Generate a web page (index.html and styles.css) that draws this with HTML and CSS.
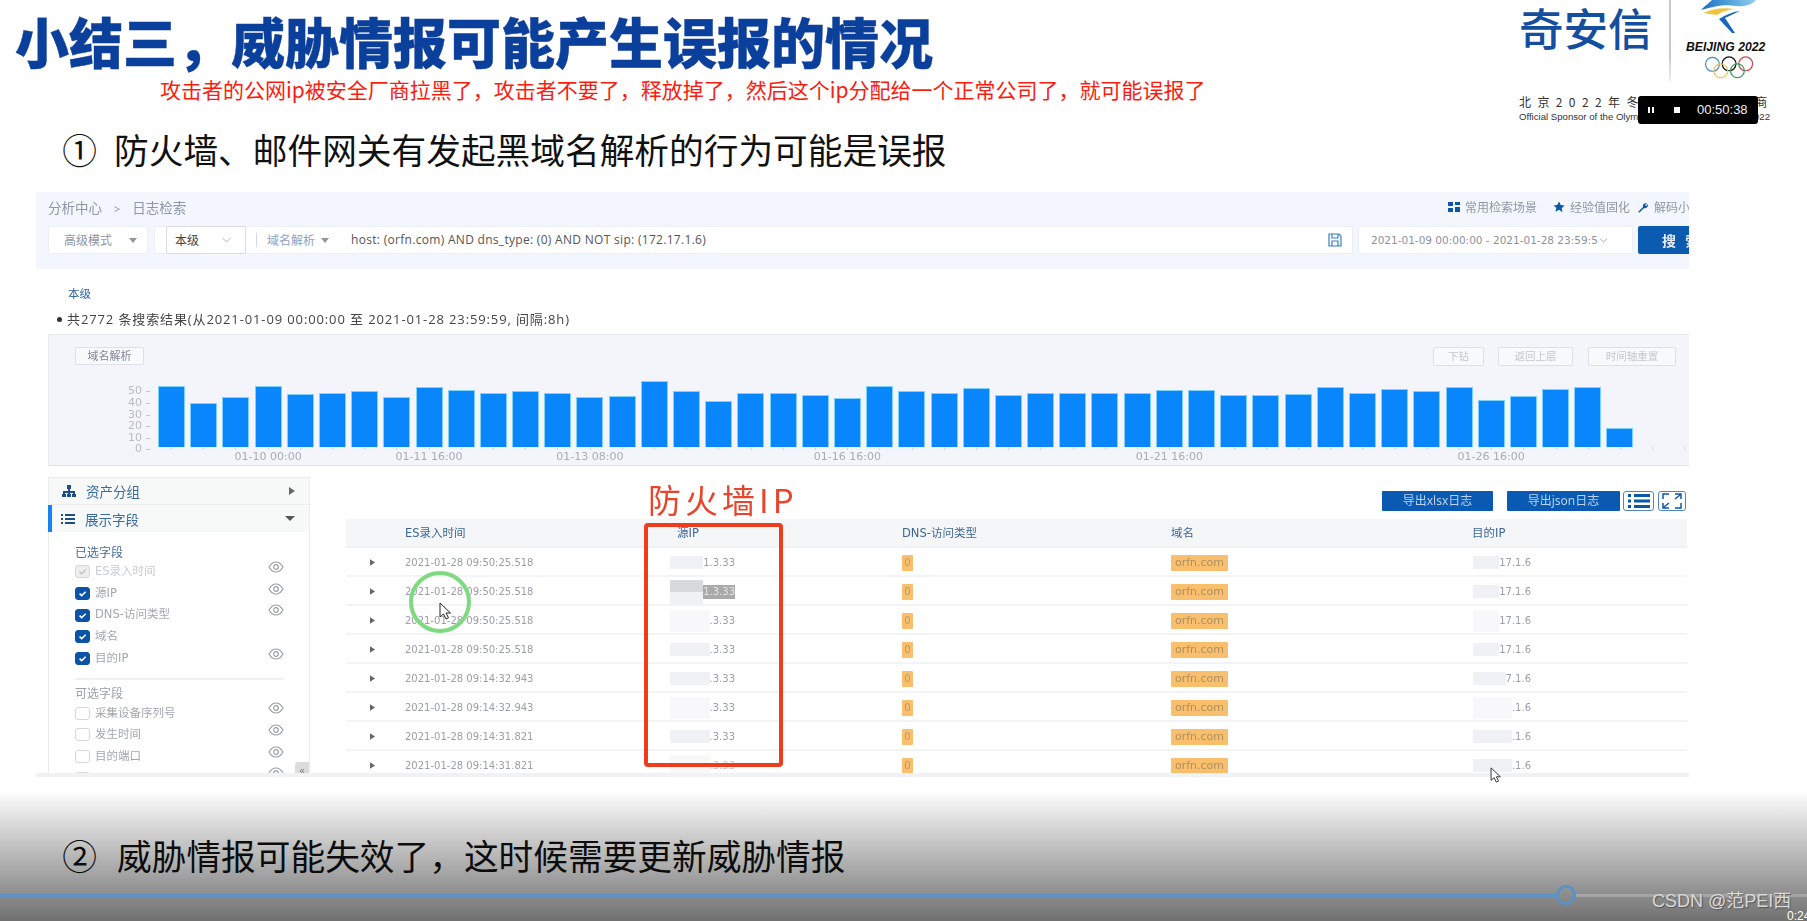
FILE: index.html
```html
<!DOCTYPE html>
<html lang="zh-CN">
<head>
<meta charset="utf-8">
<title>小结三，威胁情报可能产生误报的情况</title>
<link rel="stylesheet" href="styles.css">
</head>
<body>
<svg class="defs" width="0" height="0" aria-hidden="true">
  <symbol id="eye" viewBox="0 0 16 12"><path d="M1 6c2-3.4 4.4-5 7-5s5 1.600 7 5c-2 3.400-4.400 5-7 5s-5-1.600-7-5z" fill="none" stroke="#9a9ea5" stroke-width="1.200"/><circle cx="8" cy="6" r="2.300" fill="none" stroke="#9a9ea5" stroke-width="1.200"/></symbol>
  <symbol id="tick" viewBox="0 0 15 13"><path d="M4 6.700l2.500 2.300 4.800-4.500" fill="none" stroke="#fff" stroke-width="1.800"/></symbol>
  <symbol id="tri" viewBox="0 0 6 8"><path d="M0 0l6 4-6 4z" fill="#666"/></symbol>
</svg>
<main class="page">
  <header class="top">
    <div class="heads">
      <h1 class="title">小结三，威胁情报可能产生误报的情况</h1>
      <p class="note">攻击者的公网ip被安全厂商拉黑了，攻击者不要了，释放掉了，然后这个ip分配给一个正常公司了，就可能误报了</p>
      <p class="point point-one"><span class="num">①</span><span>防火墙、邮件网关有发起黑域名解析的行为可能是误报</span></p>
    </div>
    <div class="brand">
      <div class="brand-row">
        <span class="qax">奇安信</span>
        <span class="brand-rule"></span>
        <div class="games">
          <svg class="emblem" viewBox="0 0 60 34" width="60" height="34">
            <defs><linearGradient id="rib" x1="0" x2="1"><stop offset="0" stop-color="#1670c4"/><stop offset="1" stop-color="#8fd0ee"/></linearGradient></defs>
            <path d="M2 10C7 5 11 2 13 0h44c-4 5-12 7-20 6-12-2-20 0-35 4z" fill="url(#rib)"/>
            <path d="M4 13c10-4 20-6 31-4-7 1-13 3-17 6-5-1-10-1-14-2z" fill="#efc43f"/>
            <path d="M41 11L26 18l10 15-3 0-13-14c6-4 13-7 21-8z" fill="#1a68bd"/>
          </svg>
          <span class="bj">BEIJING 2022</span>
          <svg class="rings" viewBox="0 0 56 26" width="52" height="24" fill="none" stroke-width="1.300">
            <circle cx="9" cy="9" r="7.500" stroke="#3d86c6"/><circle cx="27" cy="8.500" r="7.500" stroke="#111"/><circle cx="45" cy="8.500" r="7.500" stroke="#d0454f"/><circle cx="18" cy="16" r="7.500" stroke="#e9c462"/><circle cx="36" cy="16" r="7.500" stroke="#3f9a58"/>
          </svg>
        </div>
      </div>
      <p class="sponsor-cn">北京2022年冬奥会官方赞助商</p>
      <p class="sponsor-en">Official Sponsor of the Olympic Winter Games Beijing 2022</p>
    </div>
  </header>

  <section class="shot">
    <div class="search">
      <div class="crumbs">
        <span class="crumb-path">分析中心<i class="crumb-gap">&gt;</i>日志检索</span>
        <span class="links">
          <svg class="ln-ico" viewBox="0 0 12 12" width="12" height="12"><path d="M0 1h5v4H0zM7 1h5v3H7zM0 7h5v4H0zM7 6h5v5H7z" fill="#0b57a8"/></svg><span class="ln ln-a">常用检索场景</span>
          <svg class="ln-ico" viewBox="0 0 12 12" width="12" height="12"><path d="M6 .5l1.700 3.600 3.900.5-2.900 2.700.8 3.900L6 8.800l-3.500 1.900.8-3.900L.4 4.600l3.900-.5z" fill="#0b57a8"/></svg><span class="ln ln-b">经验值固化</span>
          <svg class="ln-ico" viewBox="0 0 12 12" width="12" height="12"><path d="M1 11l5-5c-.6-2 .8-4.500 4-4L8 4l1 1 2-2c.3 3-2 4.800-4.200 4.200L2.500 11.500z" fill="#0b57a8"/></svg><span class="ln">解码小工具</span>
        </span>
      </div>
      <div class="filters">
        <div class="box mode"><span>高级模式</span><i class="caret"></i></div>
        <div class="box query">
          <div class="level"><span>本级</span><svg viewBox="0 0 12 7" width="11" height="6"><path d="M1 1l5 4.500L11 1" fill="none" stroke="#aaa"/></svg></div>
          <i class="sep"></i>
          <span class="qtype">域名解析</span><i class="caret"></i>
          <span class="qtext">host: (orfn.com) AND dns_type: (0) AND NOT sip: (172.17.1.6)</span>
          <svg class="save" viewBox="0 0 14 14" width="14" height="14"><path d="M1 1h10l2 2v10H1z M4 1v4h6V1 M4 13V8h6v5" fill="none" stroke="#3a7dbe" stroke-width="1.200"/></svg>
        </div>
        <div class="box range"><span class="range-text">2021-01-09 00:00:00 - 2021-01-28 23:59:5</span><svg viewBox="0 0 12 7" width="9" height="5"><path d="M1 1l5 4.500L11 1" fill="none" stroke="#888"/></svg></div>
        <button class="go">搜 索</button>
      </div>
    </div>
    <p class="scope">本级</p>
    <p class="summary"><i class="dot"></i>共2772 条搜索结果(从2021-01-09 00:00:00 至 2021-01-28 23:59:59, 间隔:8h)</p>

    <div class="chart">
      <div class="chart-head">
        <span class="tag">域名解析</span>
        <span class="ghosts"><span class="ghost g1">下钻</span><span class="ghost g2">返回上层</span><span class="ghost g3">时间轴重置</span></span>
      </div>
      <div class="plot">
        <div class="yaxis"><span>50 –</span><span>40 –</span><span>30 –</span><span>20 –</span><span>10 –</span><span>0 –</span></div>
        <div class="bars">
          <i style="height:60px"></i><i style="height:43px"></i><i style="height:49px"></i><i style="height:60px"></i><i style="height:52px"></i><i style="height:53px"></i><i style="height:55px"></i><i style="height:49px"></i><i style="height:59px"></i><i style="height:56px"></i><i style="height:53px"></i><i style="height:55px"></i><i style="height:53px"></i><i style="height:49px"></i><i style="height:50px"></i><i style="height:65px"></i><i style="height:55px"></i><i style="height:45px"></i><i style="height:53px"></i><i style="height:53px"></i><i style="height:51px"></i><i style="height:48px"></i><i style="height:60px"></i><i style="height:55px"></i><i style="height:53px"></i><i style="height:58px"></i><i style="height:51px"></i><i style="height:53px"></i><i style="height:53px"></i><i style="height:53px"></i><i style="height:53px"></i><i style="height:56px"></i><i style="height:56px"></i><i style="height:51px"></i><i style="height:51px"></i><i style="height:52px"></i><i style="height:59px"></i><i style="height:53px"></i><i style="height:57px"></i><i style="height:55px"></i><i style="height:59px"></i><i style="height:46px"></i><i style="height:50px"></i><i style="height:57px"></i><i style="height:59px"></i><i style="height:18px"></i>
        </div>
      </div>
      <div class="xaxis">
        <span class="x3">01-10 00:00</span><span class="x8">01-11 16:00</span><span class="x13">01-13 08:00</span><span class="x21">01-16 16:00</span><span class="x31">01-21 16:00</span><span class="x41">01-26 16:00</span>
      </div>
    </div>

    <div class="lower">
      <aside class="side">
        <div class="acc">
          <svg viewBox="0 0 14 12" width="14" height="12"><path d="M5 0h4v4H8v2h5v3h1v3h-4V9h1V8H8v1h1v3H5V9h1V8H3v1h1v3H0V9h1V6h5V4H5z" fill="#1d4f86"/></svg>
          <span>资产分组</span><svg class="acc-end" viewBox="0 0 6 8" width="6" height="8"><use href="#tri"/></svg>
        </div>
        <div class="acc acc-on">
          <svg viewBox="0 0 14 12" width="14" height="12"><path d="M0 1h2v2H0zM4 1h10v2H4zM0 5h2v2H0zM4 5h10v2H4zM0 9h2v2H0zM4 9h10v2H4z" fill="#1d4f86"/></svg>
          <span>展示字段</span><i class="caret caret-dark acc-end"></i>
        </div>
        <div class="fields">
          <p class="group">已选字段</p>
          <div class="field off"><i class="chk dis"><svg viewBox="0 0 15 13"><path d="M4 6.700l2.500 2.300 4.800-4.500" fill="none" stroke="#bbb" stroke-width="1.500"/></svg></i><span>ES录入时间</span><svg class="eye"><use href="#eye"/></svg></div>
          <div class="field"><i class="chk on"><svg viewBox="0 0 15 13"><use href="#tick"/></svg></i><span>源IP</span><svg class="eye"><use href="#eye"/></svg></div>
          <div class="field"><i class="chk on"><svg viewBox="0 0 15 13"><use href="#tick"/></svg></i><span>DNS-访问类型</span><svg class="eye"><use href="#eye"/></svg></div>
          <div class="field"><i class="chk on"><svg viewBox="0 0 15 13"><use href="#tick"/></svg></i><span>域名</span></div>
          <div class="field"><i class="chk on"><svg viewBox="0 0 15 13"><use href="#tick"/></svg></i><span>目的IP</span><svg class="eye"><use href="#eye"/></svg></div>
          <hr class="rule">
          <p class="group group-b">可选字段</p>
          <div class="field"><i class="chk"></i><span>采集设备序列号</span><svg class="eye"><use href="#eye"/></svg></div>
          <div class="field"><i class="chk"></i><span>发生时间</span><svg class="eye"><use href="#eye"/></svg></div>
          <div class="field"><i class="chk"></i><span>目的端口</span><svg class="eye"><use href="#eye"/></svg></div>
          <div class="field"><i class="chk"></i><span></span><svg class="eye"><use href="#eye"/></svg></div>
        </div>
        <span class="collapse">«</span>
      </aside>
      <div class="results">
        <div class="tools">
          <button class="export ex-a">导出xlsx日志</button>
          <button class="export ex-b">导出json日志</button>
          <span class="tool t-list"><svg viewBox="0 0 22 14" width="22" height="14"><path d="M0 0h3v3H0zM6 0h16v3H6zM0 5.500h3v3H0zM6 5.500h16v3H6zM0 11h3v3H0zM6 11h16v3H6z" fill="#0b57a8"/></svg></span>
          <span class="tool t-full"><svg viewBox="0 0 20 16" width="20" height="16"><path d="M1 6V1h6M13 1h6v5M1 10v5h6M13 15h6v-5M2 14l5-4M18 2l-5 4" fill="none" stroke="#0b57a8" stroke-width="1.500"/></svg></span>
        </div>
        <div class="table">
          <div class="row head"><span></span><span>ES录入时间</span><span>源IP</span><span>DNS-访问类型</span><span>域名</span><span>目的IP</span></div>
          <div class="row"><svg class="exp"><use href="#tri"/></svg><span>2021-01-28 09:50:25.518</span><span class="ip src"><i class="mask"></i>1.3.33</span><span><b class="zero">0</b></span><span><b class="host">orfn.com</b></span><span class="ip dst"><i class="mask"></i>17.1.6</span></div>
          <div class="row"><svg class="exp"><use href="#tri"/></svg><span>2021-01-28 09:50:25.518</span><span class="ip src"><i class="mask mask-sel"></i><em class="picked">1.3.33</em></span><span><b class="zero">0</b></span><span><b class="host">orfn.com</b></span><span class="ip dst"><i class="mask"></i>17.1.6</span></div>
          <div class="row"><svg class="exp"><use href="#tri"/></svg><span>2021-01-28 09:50:25.518</span><span class="ip src"><i class="mask faint"></i>.3.33</span><span><b class="zero">0</b></span><span><b class="host">orfn.com</b></span><span class="ip dst"><i class="mask faint"></i>17.1.6</span></div>
          <div class="row"><svg class="exp"><use href="#tri"/></svg><span>2021-01-28 09:50:25.518</span><span class="ip src"><i class="mask"></i>.3.33</span><span><b class="zero">0</b></span><span><b class="host">orfn.com</b></span><span class="ip dst"><i class="mask"></i>17.1.6</span></div>
          <div class="row"><svg class="exp"><use href="#tri"/></svg><span>2021-01-28 09:14:32.943</span><span class="ip src"><i class="mask"></i>.3.33</span><span><b class="zero">0</b></span><span><b class="host">orfn.com</b></span><span class="ip dst"><i class="mask"></i>7.1.6</span></div>
          <div class="row"><svg class="exp"><use href="#tri"/></svg><span>2021-01-28 09:14:32.943</span><span class="ip src"><i class="mask faint"></i>.3.33</span><span><b class="zero">0</b></span><span><b class="host">orfn.com</b></span><span class="ip dst"><i class="mask faint"></i>.1.6</span></div>
          <div class="row"><svg class="exp"><use href="#tri"/></svg><span>2021-01-28 09:14:31.821</span><span class="ip src"><i class="mask"></i>.3.33</span><span><b class="zero">0</b></span><span><b class="host">orfn.com</b></span><span class="ip dst"><i class="mask"></i>.1.6</span></div>
          <div class="row"><svg class="exp"><use href="#tri"/></svg><span>2021-01-28 09:14:31.821</span><span class="ip src fade"><i class="mask faint"></i>.3.33</span><span><b class="zero">0</b></span><span><b class="host">orfn.com</b></span><span class="ip dst"><i class="mask"></i>.1.6</span></div>
        </div>
      </div>
    </div>
    <div class="band"></div>
  </section>

  <p class="point point-two"><span class="num">②</span><span>威胁情报可能失效了，这时候需要更新威胁情报</span></p>

  <span class="annot-label">防火墙IP</span>
  <span class="annot-box"></span>
  <span class="click-ring"></span>
  <svg class="cursor cur-a" viewBox="0 0 12 18" width="12" height="18"><path d="M1 1v14l3.500-3 2.500 5 2.500-1.200-2.500-4.800h4.500z" fill="#fff" stroke="#222"/></svg>
  <svg class="cursor cur-b" viewBox="0 0 12 18" width="11" height="16"><path d="M1 1v14l3.500-3 2.500 5 2.500-1.200-2.500-4.800h4.500z" fill="#fff" stroke="#222"/></svg>

  <div class="fade-bottom"></div>
  <div class="progress"><span class="done"></span><span class="knob"></span><span class="rest"></span></div>
  <span class="watermark">CSDN @范PEI西</span>
  <span class="clock">0:24</span>
  <div class="recorder">
    <svg viewBox="0 0 8 8" width="8" height="8"><path d="M1 1h2v6H1zM5 1h2v6H5z" fill="#fff"/></svg>
    <svg viewBox="0 0 8 8" width="8" height="8"><path d="M1 1h6v6H1z" fill="#fff"/></svg>
    <span>00:50:38</span>
  </div>
</main>
</body>
</html>
```
FILE: styles.css
```css
* { box-sizing: border-box; }
html, body { margin: 0; padding: 0; background: #fff; }
body { font-family: "Noto Sans", "Noto Sans CJK SC", sans-serif; }
p, h1 { margin: 0; }
i, em { font-style: normal; }
.defs { position: absolute; }

.page { position: relative; width: 1807px; height: 921px; overflow: hidden; background: #fff; }

/* slide head */
.top { display: flex; height: 192px; }
.heads { flex: 1; }
.title { padding: 13px 0 0 15px; font: 900 54px/55px "Noto Sans CJK SC", sans-serif; color: #0b3f9c; white-space: nowrap; -webkit-text-stroke: .4px #0b3f9c; }
.note { margin: 9px 0 0 160px; font: 400 21px/24px "Noto Sans CJK SC", sans-serif; color: #fb1c10; white-space: nowrap; }
.point { display: flex; align-items: center; gap: 17px; font: 400 34.7px/44px "Noto Sans CJK SC", sans-serif; color: #111; white-space: nowrap; }
.point-one { margin: 26px 0 0 62px; }
.point-two { margin: 56px 0 0 62px; gap: 20px; position: relative; }
.num { width: 35px; text-align: center; }

/* sponsor brand */
.brand { width: 289px; padding-left: 1px; }
.brand-row { display: flex; height: 82px; }
.qax { width: 150px; padding-top: 5px; font: 500 44.5px/44px "Noto Sans CJK SC", sans-serif; color: #144f9f; white-space: nowrap; }
.brand-rule { width: 2px; height: 81px; background: linear-gradient(#c3cad6 70%, #eef0f4); }
.games { display: flex; flex-direction: column; margin-left: 15px; width: 90px; }
.emblem { margin-left: 13px; height: 34px; }
.bj { margin-top: 7px; font: italic 700 12.2px/12px "Liberation Sans", sans-serif; color: #111; white-space: nowrap; }
.rings { margin: 3px 0 0 18px; }
.sponsor-cn { margin-top: 12px; font: 400 12px/15px "Noto Sans CJK SC", sans-serif; letter-spacing: 6.4px; color: #333; white-space: nowrap; }
.sponsor-en { margin-top: 2px; font: 400 9.6px/12px "Liberation Sans", sans-serif; color: #333; white-space: nowrap; }

/* embedded screenshot */
.shot { width: 1653px; height: 585px; margin-left: 36px; overflow: hidden; filter: blur(.45px); font-family: "Noto Sans", "Noto Sans CJK SC", sans-serif; }
.search { height: 77px; background: #f3f6fc; }
.crumbs { display: flex; height: 30px; align-items: center; padding-left: 12px; font-size: 12px; color: #8f97a6; }
.crumb-path { font-size: 13.5px; }
.crumb-gap { margin: 0 12px; font-size: 11px; }
.links { display: flex; align-items: center; margin-left: auto; white-space: nowrap; width: 241px; overflow: hidden; }
.ln-ico { flex: none; margin-right: 5px; }
.ln-a { margin-right: 16px; }
.ln-b { margin-right: 7px; }
.filters { display: flex; height: 28px; margin-top: 4px; padding-left: 12px; }
.box { display: flex; flex: none; align-items: center; height: 28px; background: #fff; border: 1px solid #eceff5; border-radius: 2px; }
.mode { width: 100px; padding-left: 15px; font-size: 12px; color: #8d95a3; }
.caret { display: inline-block; width: 0; height: 0; border: 4px solid transparent; border-top: 5px solid #8f96a3; border-bottom: 0; margin-left: 10px; }
.caret-dark { border-top-color: #555; border-left-width: 5px; border-right-width: 5px; }
.mode .caret { margin-left: 17px; }
.query { position: relative; width: 1199px; margin-left: 6px; }
.level { display: flex; align-items: center; justify-content: space-between; width: 80px; height: 28px; margin-left: 11px; padding: 0 13px 0 8px; background: #fff; border: 1px solid #d9dce2; border-radius: 2px; font-size: 12px; color: #444; flex: none; }
.sep { width: 1px; height: 14px; margin-left: 10px; background: #d5d9e0; }
.qtype { margin-left: 10px; font-size: 12px; color: #8fa2be; }
.query .caret { margin-left: 6px; }
.qtext { margin-left: 22px; font: 400 12px/1 "Open Sans", sans-serif; letter-spacing: .3px; color: #555; white-space: nowrap; }
.save { margin-left: auto; margin-right: 10px; }
.range { gap: 1px; width: 275px; margin-left: 5px; padding: 0 0 0 12px; }
.range-text { font: 400 10.5px/1 "DejaVu Sans", sans-serif; color: #8d929b; white-space: nowrap; }
.go { flex: none; width: 70px; height: 28px; margin-left: 5px; border: 0; border-radius: 2px; padding: 0 0 0 24px; background: #0b5bb0; color: #e8eef7; font: 700 14px/28px "Noto Sans CJK SC", sans-serif; text-align: left; letter-spacing: 3px; white-space: nowrap; }
.scope { margin: 16px 0 0 32px; font-size: 11.5px; line-height: 18px; color: #2f66a3; }
.summary { display: flex; align-items: center; height: 18px; margin: 7px 0 0 21px; font: 400 13px/18px "Open Sans", "Noto Sans CJK SC", sans-serif; letter-spacing: .88px; color: #444; white-space: nowrap; }
.dot { width: 5px; height: 5px; margin-right: 5px; border-radius: 50%; background: #333; }

/* chart */
.chart { height: 132px; margin: 6px 0 0 12px; padding-top: 12px; background: #f3f5fb; border: 1px solid #e7eaf0; border-bottom-color: #dfe3ea; border-right: 0; }
.chart-head { display: flex; height: 18px; }
.tag { width: 69px; height: 18px; margin-left: 26px; background: #f8f9fb; border: 1px solid #dde1e7; border-radius: 2px; text-align: center; font-size: 11px; line-height: 16px; color: #7f8793; }
.ghosts { display: flex; margin-left: auto; margin-right: 13px; }
.ghost { height: 19px; border: 1px solid #dcdfe5; border-radius: 2px; background: #f8f9fb; text-align: center; font-size: 10.5px; line-height: 17px; color: #c4c7cc; }
.g1 { width: 51px; }
.g2 { width: 75px; margin-left: 14px; }
.g3 { width: 88px; margin-left: 15px; }
.plot { display: flex; align-items: flex-end; height: 82px; }
.yaxis { display: flex; flex-direction: column; width: 109px; margin-bottom: -8px; align-items: flex-end; padding-right: 7px; }
.yaxis span { height: 11.6px; font: 400 11px/11.6px "DejaVu Sans", sans-serif; color: #b7bbc2; }
.bars { display: grid; grid-template-columns: repeat(46, 27px); column-gap: 5.2px; align-items: end; }
.bars i { display: block; box-sizing: content-box; width: 25px; background: #0a86fd; border: 1px solid #7fd2fb; border-bottom: 0; }
.xaxis { display: grid; grid-template-columns: repeat(46, 27px); column-gap: 5.2px; margin-left: 109px; height: 19px; background: repeating-linear-gradient(90deg, transparent 0 13px, #d3d6dc 13px 14px, transparent 14px 32.2px) no-repeat 0 0 / 100% 3px; }
.xaxis span { width: 27px; display: flex; justify-content: center; white-space: nowrap; font: 400 11px/19px "DejaVu Sans", sans-serif; color: #a8acb3; }
.x3 { grid-column: 4; grid-row: 1; }
.x8 { grid-column: 9; grid-row: 1; }
.x13 { grid-column: 14; grid-row: 1; }
.x21 { grid-column: 22; grid-row: 1; }
.x31 { grid-column: 32; grid-row: 1; }
.x41 { grid-column: 42; grid-row: 1; }

/* lower */
.lower { display: flex; height: 307px; overflow: hidden; padding-left: 12px; }
.side { position: relative; width: 262px; height: 296px; margin-top: 11px; flex: none; border: 1px solid #ececec; border-bottom: 0; }
.acc { display: flex; align-items: center; gap: 10px; height: 27px; padding: 0 14px 0 13px; background: #f7f8f8; border-bottom: 1px solid #ececec; font-size: 13.5px; color: #3b6b9f; }
.acc-on { height: 27px; border-left: 4px solid #1383ef; border-bottom: 0; padding-left: 9px; margin-left: -1px; }
.acc-end { margin-left: auto; }
.fields { padding: 13px 25px 0 26px; }
.group { font-size: 12px; line-height: 16px; color: #4a6e96; }
.group-b { color: #9aa1ab; margin-top: 6px; }
.field { display: flex; align-items: center; height: 21.7px; font: 400 11.5px/1 "DejaVu Sans", "Noto Sans CJK SC", sans-serif; color: #a3a7ae; }
.off { color: #c9ccd1; }
.chk { display: block; flex: none; width: 15px; height: 13px; margin-right: 5px; background: #fff; border: 1px solid #d5d7dc; border-radius: 3px; }
.chk svg { display: block; width: 100%; height: 100%; }
.chk.on { background: #0a53a6; border-color: #0a53a6; }
.chk.dis { background: #eee; }
.eye { width: 16px; height: 12px; margin: -10px 0 0 auto; flex: none; }
.rule { height: 2px; margin: 9px 0 0; border: 0; background: #eff0f2; }
.collapse { position: absolute; right: 0; bottom: -4px; width: 14px; height: 15px; background: #dcdcdc; border-radius: 3px 0 0 0; text-align: center; font-size: 11px; line-height: 15px; color: #888; }

.results { width: 1341px; margin-left: 36px; flex: none; }
.tools { display: flex; align-items: flex-start; height: 53px; padding: 25px 0 0 1036px; }
.export { width: 111px; height: 20px; padding: 0; border: 0; border-radius: 1px; background: #0a5ab3; color: #b9d2ee; font: 400 12px/20px "Noto Sans", "Noto Sans CJK SC", sans-serif; }
.ex-b { width: 113px; margin-left: 14px; }
.tool { display: flex; align-items: center; justify-content: center; height: 20px; border: 1px solid #4f86bf; border-radius: 3px; background: #fff; }
.t-list { width: 31px; margin-left: 3px; }
.t-full { width: 28px; margin-left: 4px; }
.row { display: grid; grid-template-columns: 59px 272px 225px 269px 301px 215px; align-items: center; height: 29px; padding-top: 2px; border-bottom: 2px solid #f3f4f6; font: 400 10px/1 "DejaVu Sans", "Noto Sans CJK SC", sans-serif; color: #9a9ea6; white-space: nowrap; }
.head { height: 29px; background: #f5f6f8; border-bottom: 2px solid #eff1f3; color: #3d6799; font-size: 11.5px; }
.exp { width: 5px; height: 7px; margin-left: 24px; }
.ip { display: flex; align-items: center; justify-content: flex-end; width: 65px; margin-left: -7px; }
.dst { width: 58px; margin-left: 1px; }
.mask { flex: 1; height: 13px; background: #f0f1f4; }
.faint { height: 22px; background: #f8f8fa; }
.mask-sel { height: 24px; background: linear-gradient(#d8d9dc 50%, #f0f1f4 50%); }
.picked { background: #aaa; color: #e4e4e4; padding: 2px 0; }
.fade { color: #c8cad0; }
.zero { display: inline-block; width: 11px; height: 16px; background: #f9bf6c; border-radius: 1px; text-align: center; font-weight: 400; line-height: 16px; color: #b79c6c; }
.host { display: inline-block; width: 57px; height: 16px; background: #f9bf6c; border-radius: 1px; text-align: center; font-weight: 400; font-size: 11px; line-height: 16px; color: #ab9162; }
.band { height: 4px; background: #f0f2f6; }

/* annotations */
.annot-label { position: absolute; left: 648px; top: 481px; font: 400 33px/36px "Noto Sans CJK SC", sans-serif; letter-spacing: 4px; color: #e8452c; white-space: nowrap; }
.annot-box { position: absolute; left: 644px; top: 523px; width: 139px; height: 244px; border: 4px solid #ee3c1d; border-radius: 4px; }
.click-ring { position: absolute; left: 409px; top: 571px; width: 62px; height: 62px; border: 4px solid #7fd980; border-radius: 50%; }
.cursor { position: absolute; }
.cur-a { left: 439px; top: 602px; }
.cur-b { left: 1490px; top: 767px; }

/* video chrome */
.fade-bottom { position: absolute; left: 0; right: 0; top: 790px; bottom: 0; background: linear-gradient(rgba(0,0,0,0), rgba(0,0,0,.56)); }
.progress { position: absolute; left: 0; right: 0; top: 885px; height: 20px; display: flex; align-items: center; }
.done { width: 1556px; height: 3px; background: #5a92c8; }
.knob { flex: none; width: 20px; height: 20px; border: 3px solid #5a92c8; border-radius: 50%; }
.rest { flex: 1; height: 3px; background: rgba(255,255,255,.22); }
.watermark { position: absolute; left: 1652px; top: 889px; font: 400 18px/24px "Liberation Sans", "Noto Sans CJK SC", sans-serif; color: #d9d9d9; text-shadow: 1px 1px 1px #555; white-space: nowrap; }
.clock { position: absolute; left: 1787px; top: 909px; font: 400 12px/14px "Liberation Sans", sans-serif; color: #fff; white-space: nowrap; }
.recorder { position: absolute; left: 1638px; top: 96px; display: flex; align-items: center; width: 120px; height: 28px; padding-left: 9px; background: #000; border-radius: 3px; color: #f2f2f2; font: 400 13px/28px "Liberation Sans", sans-serif; }
.recorder svg { margin-right: 18px; flex: none; }
.recorder svg:nth-child(2) { margin-right: 16px; }
```
